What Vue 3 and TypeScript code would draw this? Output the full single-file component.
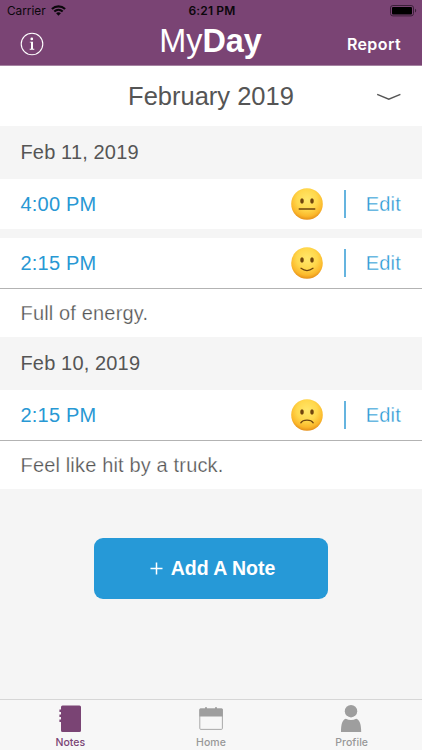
<script setup lang="ts">
type Mood = 'neutral' | 'happy' | 'sad'

interface Entry {
  time: string
  mood: Mood
  note?: string
}

interface Day {
  date: string
  entries: Entry[]
}

const days: Day[] = [
  {
    date: 'Feb 11, 2019',
    entries: [
      { time: '4:00 PM', mood: 'neutral' },
      { time: '2:15 PM', mood: 'happy', note: 'Full of energy.' },
    ],
  },
  {
    date: 'Feb 10, 2019',
    entries: [{ time: '2:15 PM', mood: 'sad', note: 'Feel like hit by a truck.' }],
  },
]

const mouths: Record<Mood, string> = {
  neutral: 'M8.2 21H23.8',
  happy: 'M10 21.3Q16 25.8 22 21.3',
  sad: 'M9.8 23.8C12 20.1 20 20.1 22.2 23.8',
}
</script>

<template>
  <div class="screen">
    <header class="top">
      <div class="status">
        <div class="carrier">
          <span>Carrier</span>
          <svg width="15" height="11" viewBox="0 0 15 11">
            <g fill="none" stroke="#0b070b" stroke-width="2.1">
              <path d="M.9 4.1C4.7.5 10.3.5 14.1 4.1" />
              <path d="M3.3 6.6C5.8 4.3 9.2 4.3 11.7 6.6" />
            </g>
            <path d="M5.1 8.3C6.5 7 8.5 7 9.9 8.3L7.5 10.8Z" fill="#0b070b" />
          </svg>
        </div>
        <span class="clock">6:21 PM</span>
        <svg class="battery" width="27" height="12" viewBox="0 0 27 12">
          <rect x=".5" y=".5" width="23" height="10.4" rx="2.4" fill="none" stroke="#3b2039" />
          <rect x="2" y="2" width="20" height="7.4" rx="1" fill="#000" />
          <path d="M25 3.8C26.6 4.3 26.6 7 25 7.5Z" fill="#3b2039" />
        </svg>
      </div>
      <div class="nav">
        <svg class="info" width="24" height="24" viewBox="0 0 24 24">
          <circle cx="12" cy="12" r="10.8" fill="none" stroke="#fff" stroke-width="1.1" />
          <circle cx="11.8" cy="6.9" r="1.35" fill="#fff" />
          <path d="M9.8 9.7H13V16.8H14.3V17.7H9.7V16.8H11V10.6H9.8Z" fill="#fff" />
        </svg>
        <h1 class="brand">My<b>Day</b></h1>
        <span class="report">Report</span>
      </div>
    </header>

    <div class="month">
      <span class="month-name">February 2019</span>
      <svg class="chevron" width="26" height="9" viewBox="0 0 26 9">
        <path d="M1.2 2.4L12.8 7.2L24.4 2.4" fill="none" stroke="#555" stroke-width="1.4" />
      </svg>
    </div>

    <main>
      <svg class="defs" width="0" height="0">
        <defs>
          <radialGradient id="face" cx=".5" cy=".36" r=".64">
            <stop offset="0" stop-color="#ffe76c" />
            <stop offset=".5" stop-color="#ffd84c" />
            <stop offset=".82" stop-color="#fbb82b" />
            <stop offset="1" stop-color="#e58f19" />
          </radialGradient>
        </defs>
      </svg>
      <section v-for="day in days" :key="day.date">
        <h2 class="date">{{ day.date }}</h2>
        <div class="entries">
          <article v-for="(entry, i) in day.entries" :key="i" class="entry">
            <div class="row">
              <span class="time">{{ entry.time }}</span>
              <svg class="mood" width="32" height="32" viewBox="0 0 32 32">
                <circle cx="16" cy="16" r="15.8" fill="url(#face)" />
                <ellipse cx="11" cy="13" rx="1.8" ry="2.8" fill="#70450e" />
                <ellipse cx="21" cy="13" rx="1.8" ry="2.8" fill="#70450e" />
                <path :d="mouths[entry.mood]" fill="none" stroke="#70450e" stroke-width="1.3" stroke-linecap="round" />
              </svg>
              <i class="divider"></i>
              <span class="edit">Edit</span>
            </div>
            <p v-if="entry.note" class="note">{{ entry.note }}</p>
          </article>
        </div>
      </section>
      <button class="add" type="button">
        <svg width="13" height="13" viewBox="0 0 13 13">
          <path d="M6.5 .5V12.5M.5 6.5H12.5" stroke="#fff" stroke-width="1.5" />
        </svg>
        <span>Add A Note</span>
      </button>
    </main>

    <nav class="tabs">
      <div class="tab active">
        <svg width="24" height="30" viewBox="0 0 24 30">
          <path d="M4.5 1.5H21.5Q23 1.5 23 3V26.5Q23 28 21.5 28H4.5Q3 28 3 26.5V18H1.4V15.5H3V13H1.4V10.5H3V8H1.4V5.5H3V3Q3 1.5 4.5 1.5Z" fill="#7a4474" />
        </svg>
        <span>Notes</span>
      </div>
      <div class="tab">
        <svg width="24" height="30" viewBox="0 0 24 30">
          <rect x=".8" y="5" width="22.6" height="20.4" rx="1" fill="none" stroke="#a0a0a0" stroke-width=".9" />
          <path d="M.4 5.5Q.4 4.5 1.4 4.5H6V3.2H8V4.5H16V3.2H18V4.5H22.8Q23.8 4.5 23.8 5.5V12.5H.4Z" fill="#9e9e9e" />
        </svg>
        <span>Home</span>
      </div>
      <div class="tab">
        <svg width="24" height="30" viewBox="0 0 24 30">
          <circle cx="11" cy="7.2" r="6.2" fill="#9e9e9e" />
          <path d="M1 28C1 20.5 2.2 15.8 5.8 14.7C9 16.4 13 16.4 16.2 14.7C19.8 15.8 21.2 20.5 21.2 28Z" fill="#9e9e9e" />
        </svg>
        <span>Profile</span>
      </div>
    </nav>
  </div>
</template>

<style>
body {
  margin: 0;
}
</style>

<style scoped>
.screen {
  width: 422px;
  height: 750px;
  display: flex;
  flex-direction: column;
  overflow: hidden;
  background: #f5f5f5;
  font-family: 'Liberation Sans', Arial, sans-serif;
  color: #555;
}
.top {
  flex: none;
  height: 66px;
  box-sizing: border-box;
  background: #7a4474;
  border-bottom: 1px solid #a583a1;
}
.status {
  height: 22px;
  padding: 0 5px 0 7px;
  display: grid;
  grid-template-columns: 1fr auto 1fr;
  align-items: center;
  font: 400 11.8px/22px Inter, sans-serif;
  color: #0b070b;
}
.carrier {
  display: flex;
  align-items: center;
  gap: 5px;
}
.carrier svg {
  margin-bottom: 1px;
}
.clock {
  font-weight: 600;
  font-size: 12px;
  letter-spacing: 0.15px;
}
.battery {
  justify-self: end;
}
.nav {
  height: 42px;
  padding: 0 21px 0 20px;
  display: grid;
  grid-template-columns: 1fr auto 1fr;
  align-items: center;
}
.brand {
  margin: 0;
  font-size: 32.4px;
  line-height: 38px;
  font-weight: 400;
  color: #fff;
  padding-bottom: 6px;
}
.report {
  justify-self: end;
  font: 600 16px/20px Inter, sans-serif;
  letter-spacing: 0.4px;
  color: #fff;
}
.month {
  flex: none;
  height: 60px;
  padding: 0 20px;
  display: grid;
  grid-template-columns: 1fr auto 1fr;
  align-items: center;
  background: #fff;
}
.month-name {
  grid-column: 2;
  font-size: 25.5px;
  line-height: 30px;
}
.chevron {
  justify-self: end;
}
main {
  flex: 1;
  display: flex;
  flex-direction: column;
}
.defs {
  position: absolute;
}
.date {
  margin: 0;
  padding-left: 20.5px;
  font-size: 20px;
  font-weight: 400;
  line-height: 53px;
  letter-spacing: 0.15px;
}
.entries {
  display: flex;
  flex-direction: column;
  gap: 9px;
}
.entry {
  background: #fff;
}
.row {
  height: 50px;
  padding: 0 21px 0 20.5px;
  display: flex;
  align-items: center;
}
.time {
  flex: 1;
  font-size: 20px;
  letter-spacing: 0.2px;
  color: #2898d4;
}
.mood {
  margin-bottom: 1px;
}
.divider {
  width: 1.5px;
  height: 28px;
  margin: 0 20px 1px 21px;
  background: #65b4df;
}
.edit {
  font-size: 20px;
  letter-spacing: 0.2px;
  color: #2898d4;
  -webkit-text-stroke: 0.3px #fff;
}
.note {
  margin: 0;
  height: 49px;
  box-sizing: border-box;
  border-top: 1px solid #b3b3b3;
  padding-left: 20.5px;
  font-size: 20px;
  line-height: 48px;
  letter-spacing: 0.16px;
  -webkit-text-stroke: 0.25px #fff;
}
.add {
  align-self: center;
  width: 234px;
  height: 61px;
  margin: 49px 0 0;
  padding: 0 0 0 3px;
  border: 0;
  border-radius: 9px;
  display: flex;
  align-items: center;
  justify-content: center;
  gap: 8px;
  background: #2699d7;
  color: #fff;
  font: 700 19.5px 'Liberation Sans', Arial, sans-serif;
}
.tabs {
  flex: none;
  height: 51px;
  box-sizing: border-box;
  border-top: 1px solid #d6d6d6;
  background: #f7f7f7;
  display: grid;
  grid-template-columns: repeat(3, 1fr);
  padding-top: 4px;
}
.tab {
  display: flex;
  flex-direction: column;
  align-items: center;
  font: 500 10.5px/14px Inter, sans-serif;
  letter-spacing: 0.05px;
  color: #989898;
}
.tab span {
  padding-top: 2px;
}
.tab.active {
  color: #7a4474;
}
</style>
